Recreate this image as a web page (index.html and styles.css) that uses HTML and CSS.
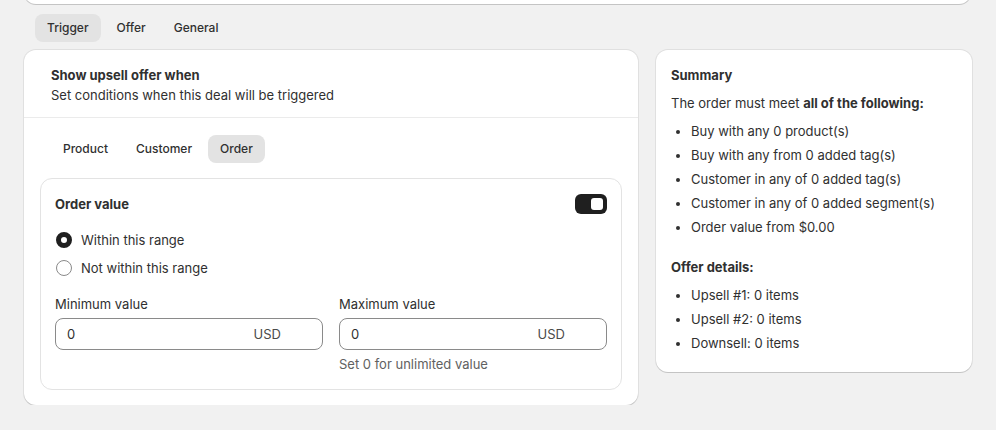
FILE: index.html
```html
<!DOCTYPE html>
<html lang="en">
<head>
    <meta charset="UTF-8">
    <meta name="viewport" content="width=device-width, initial-scale=1.0">
    <title>Upsell trigger</title>
    <link rel="stylesheet" href="styles.css">
</head>
<body>

    <div class="page">
        <div class="top-card"></div>

        <div class="tabs main-tabs">
            <button class="tab active">Trigger</button>
            <button class="tab">Offer</button>
            <button class="tab">General</button>
        </div>

        <div class="layout">
            <div class="card trigger-card">
                <div class="card-header">
                    <h2>Show upsell offer when</h2>
                    <p>Set conditions when this deal will be triggered</p>
                </div>

                <div class="tabs sub-tabs">
                    <button class="tab">Product</button>
                    <button class="tab">Customer</button>
                    <button class="tab active">Order</button>
                </div>

                <div class="inner-card">
                    <div class="inner-head">
                        <h3>Order value</h3>
                        <span class="toggle on"><span class="knob"></span></span>
                    </div>

                    <div class="radios">
                        <label class="radio checked"><span class="dot"></span>Within this range</label>
                        <label class="radio"><span class="dot"></span>Not within this range</label>
                    </div>

                    <div class="fields">
                        <div class="field">
                            <div class="label">Minimum value</div>
                            <div class="input"><span>0</span><span class="suffix">USD</span></div>
                        </div>
                        <div class="field">
                            <div class="label">Maximum value</div>
                            <div class="input"><span>0</span><span class="suffix">USD</span></div>
                            <div class="help">Set 0 for unlimited value</div>
                        </div>
                    </div>
                </div>
            </div>

            <div class="card summary-card">
                <h2>Summary</h2>
                <p>The order must meet <strong>all of the following:</strong></p>
                <ul>
                    <li>Buy with any 0 product(s)</li>
                    <li>Buy with any from 0 added tag(s)</li>
                    <li>Customer in any of 0 added tag(s)</li>
                    <li>Customer in any of 0 added segment(s)</li>
                    <li>Order value from $0.00</li>
                </ul>
                <h2 class="offer-title">Offer details:</h2>
                <ul>
                    <li>Upsell #1: 0 items</li>
                    <li>Upsell #2: 0 items</li>
                    <li>Downsell: 0 items</li>
                </ul>
            </div>
        </div>
    </div>

</body>
</html>
```

FILE: styles.css
```css
body { margin: 0; background: #f1f1f1; font-family: Inter, "Noto Sans", sans-serif; font-size: 13px; line-height: 20px; color: #303030; }
.page { width: 948px; padding-left: 24px; }

.card, .top-card { background: #fff; border-radius: 12px; box-shadow: 0 1px 0 rgba(0, 0, 0, 0.12), 0 0 0 1px rgba(0, 0, 0, 0.07); }
.top-card { height: 16px; margin-top: -12px; border-radius: 0 0 12px 12px; width: 947px; }

.tabs { display: flex; gap: 4px; }
.tab { font: inherit; font-size: 12px; font-weight: 500; color: #303030; background: none; border: none; border-radius: 8px; padding: 4px 12px; height: 28px; cursor: pointer; }
.tab.active { background: #e3e3e3; }
.main-tabs { padding: 0 0 0 11px; margin: 10px 0 8px; }

.layout { display: flex; gap: 18px; align-items: flex-start; }
.trigger-card { width: 614px; padding-bottom: 15px; }
.summary-card { width: 316px; padding: 15px 15px 19px; box-sizing: border-box; }

h2, h3 { font-size: 13px; font-weight: 650; margin: 0; }
p { margin: 0; }

.card-header { padding: 15px 27px 12px; border-bottom: 1px solid #ebebeb; }
.sub-tabs { padding: 17px 27px 15px; }

.inner-card { margin: 0 16px; border: 1px solid #e3e3e3; border-radius: 12px; padding: 15px 14px 15px; }
.inner-head { display: flex; justify-content: space-between; align-items: center; }
.toggle { width: 32px; height: 20px; border-radius: 6px; background: #d4d4d4; display: flex; align-items: center; padding: 0 4px; box-sizing: border-box; }
.toggle.on { background: #1f1f1f; justify-content: flex-end; }
.knob { width: 12px; height: 12px; border-radius: 3px; background: #fff; }

.radios { margin-top: 16px; display: flex; flex-direction: column; gap: 8px; }
.radio { display: flex; align-items: center; gap: 9px; cursor: pointer; }
.dot { width: 16px; height: 16px; border-radius: 50%; border: 1px solid #8a8a8a; box-sizing: border-box; margin-left: 1px; }
.radio.checked .dot { border: 5px solid #1f1f1f; }

.fields { display: flex; gap: 16px; margin-top: 16px; }
.field { flex: 1; }
.label { margin-bottom: 4px; }
.input { display: flex; justify-content: space-between; height: 32px; box-sizing: border-box; border: 1px solid #8a8a8a; border-radius: 8px; padding: 5px 41px 5px 11px; }
.suffix { color: #4a4a4a; }
.help { color: #616161; margin-top: 4px; }

.summary-card p { margin-top: 8px; }
.summary-card ul { margin: 8px 0 0; padding-left: 20px; }
.summary-card li { margin-bottom: 4px; }
.summary-card li:last-child { margin-bottom: 0; }
.offer-title { margin-top: 20px; }
```
